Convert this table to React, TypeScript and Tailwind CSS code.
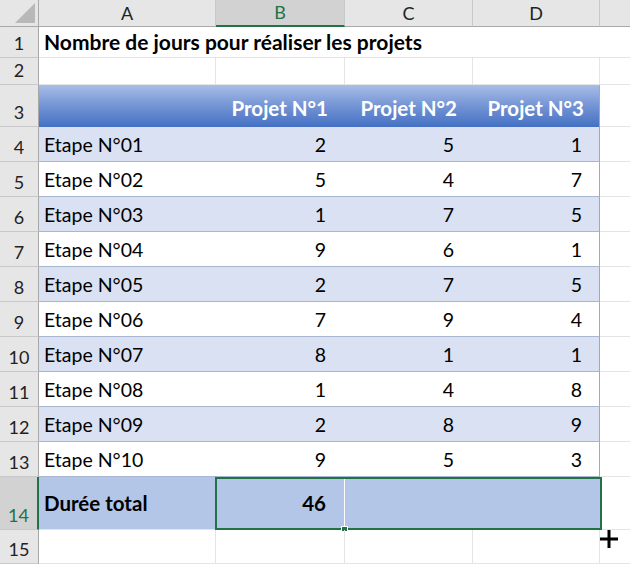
import React from "react";

const data: number[][] = [
  [2, 5, 1],
  [5, 4, 7],
  [1, 7, 5],
  [9, 6, 1],
  [2, 7, 5],
  [7, 9, 4],
  [8, 1, 1],
  [1, 4, 8],
  [2, 8, 9],
  [9, 5, 3],
];

const font = { fontFamily: "Lato, 'Open Sans', sans-serif" };

function RowHeader({ n, h, selected }: { n: number; h: string; selected?: boolean }) {
  return (
    <div
      className={`${h} w-[39px] shrink-0 flex justify-center items-end border-b border-[#c8c8c8] ${
        selected ? "bg-[#d2d2d2] text-[#217346] border-r-2 border-r-[#217346]" : "bg-[#e6e6e6] text-[#222] border-r border-r-[#a8a8a8]"
      } text-[18px] leading-none`}
    >
      <span className="pb-[5px]">{n}</span>
    </div>
  );
}

export default function App() {
  return (
    <div className="w-[630px] h-[564px] overflow-hidden bg-white relative text-black" style={font}>
      {/* Column headers */}
      <div className="flex h-[27px]">
        <div className="w-[39px] shrink-0 bg-[#e6e6e6] border-r border-b border-[#a8a8a8] relative">
          <svg className="absolute right-[3px] bottom-[3px]" width="20" height="20" viewBox="0 0 20 20">
            <polygon points="20,0 20,20 0,20" fill="#b8b8b8" />
          </svg>
        </div>
        <div className="w-[177px] shrink-0 bg-[#e6e6e6] border-r border-r-[#c8c8c8] border-b border-b-[#a8a8a8] flex items-center justify-center text-[18px] text-[#222]">A</div>
        <div className="w-[129px] shrink-0 bg-[#d2d2d2] border-r border-r-[#c8c8c8] border-b-2 border-b-[#217346] flex items-center justify-center text-[18px] text-[#217346]">B</div>
        <div className="w-[128px] shrink-0 bg-[#e6e6e6] border-r border-r-[#c8c8c8] border-b border-b-[#a8a8a8] flex items-center justify-center text-[18px] text-[#222]">C</div>
        <div className="w-[127px] shrink-0 bg-[#e6e6e6] border-r border-r-[#c8c8c8] border-b border-b-[#a8a8a8] flex items-center justify-center text-[18px] text-[#222]">D</div>
        <div className="flex-1 bg-[#e6e6e6] border-b border-b-[#a8a8a8]" />
      </div>

      {/* Row 1 */}
      <div className="flex h-[31px]">
        <RowHeader n={1} h="h-[31px]" />
        <div className="flex-1 flex items-end pl-[5px] pb-[5px] border-b border-[#e4e4e4] font-bold text-[21px] leading-none whitespace-nowrap">
          Nombre de jours pour réaliser les projets
        </div>
      </div>

      {/* Row 2 */}
      <div className="flex h-[27px]">
        <RowHeader n={2} h="h-[27px]" />
        <div className="w-[177px] shrink-0 border-r border-b border-[#e4e4e4]" />
        <div className="w-[129px] shrink-0 border-r border-b border-[#e4e4e4]" />
        <div className="w-[128px] shrink-0 border-r border-b border-[#e4e4e4]" />
        <div className="w-[127px] shrink-0 border-r border-b border-[#e4e4e4]" />
        <div className="flex-1 border-b border-[#e4e4e4]" />
      </div>

      {/* Row 3 header */}
      <div className="flex h-[42px]">
        <RowHeader n={3} h="h-[42px]" />
        <div className="w-[561px] shrink-0 flex bg-gradient-to-b from-[#a9bde6] via-[#7394d4] to-[#4470c3] text-white font-bold text-[20.5px] leading-none border-r border-[#9aa9c4]">
          <div className="w-[177px] shrink-0" />
          <div className="w-[129px] shrink-0 flex items-end justify-end pr-[17px] pb-[9px]">Projet N°1</div>
          <div className="w-[128px] shrink-0 flex items-end justify-end pr-[16px] pb-[9px]">Projet N°2</div>
          <div className="w-[127px] shrink-0 flex items-end justify-end pr-[16px] pb-[9px]">Projet N°3</div>
        </div>
        <div className="flex-1 border-b border-[#e4e4e4]" />
      </div>

      {/* Data rows */}
      {data.map((r, i) => (
        <div key={i} className="flex h-[35px]">
          <RowHeader n={i + 4} h="h-[35px]" />
          <div
            className={`w-[561px] shrink-0 flex text-[19.5px] leading-none border-b border-b-[#a9b6d1] border-r border-r-[#9aa9c4] ${
              i % 2 === 0 ? "bg-[#d9e1f2]" : "bg-white"
            }`}
          >
            <div className="w-[177px] shrink-0 flex items-end pl-[5px] pb-[7px]">
              Etape N°{String(i + 1).padStart(2, "0")}
            </div>
            <div className="w-[129px] shrink-0 flex items-end justify-end pr-[19px] pb-[7px]">{r[0]}</div>
            <div className="w-[128px] shrink-0 flex items-end justify-end pr-[19px] pb-[7px]">{r[1]}</div>
            <div className="w-[127px] shrink-0 flex items-end justify-end pr-[18px] pb-[7px]">{r[2]}</div>
          </div>
          <div className="flex-1 border-b border-[#e4e4e4]" />
        </div>
      ))}

      {/* Row 14 total */}
      <div className="flex h-[53px] relative">
        <RowHeader n={14} h="h-[53px]" selected />
        <div className="w-[561px] shrink-0 flex bg-[#b4c6e7] font-bold text-[20.5px] leading-none border-b border-[#e4e4e4]">
          <div className="w-[177px] shrink-0 flex items-center pl-[5px]">Durée total</div>
          <div className="w-[129px] shrink-0 flex items-center justify-end pr-[19px]">46</div>
          <div className="flex-1" />
        </div>
        <div className="flex-1 border-b border-[#e4e4e4]" />
        {/* selection overlay */}
        <div className="absolute left-[215px] top-0 w-[387px] h-[53px] border-2 border-[#217346] pointer-events-none" />
        <div className="absolute left-[344px] top-[2px] w-px h-[49px] bg-white" />
        <div className="absolute left-[341px] top-[49px] w-[7px] h-[6px] bg-[#217346] border border-white" />
      </div>

      {/* Row 15 */}
      <div className="flex h-[34px] relative">
        <RowHeader n={15} h="h-[34px]" />
        <div className="w-[177px] shrink-0 border-r border-b border-[#e4e4e4]" />
        <div className="w-[129px] shrink-0 border-r border-b border-[#e4e4e4]" />
        <div className="w-[128px] shrink-0 border-r border-b border-[#e4e4e4]" />
        <div className="w-[127px] shrink-0 border-r border-b border-[#e4e4e4]" />
        <div className="flex-1 border-b border-[#e4e4e4]" />
        {/* cross cursor */}
        <svg className="absolute left-[600px] top-[0px]" width="18" height="18" viewBox="0 0 18 18">
          <rect x="0" y="7.5" width="18" height="3" fill="#000" />
          <rect x="7.5" y="0" width="3" height="18" fill="#000" />
        </svg>
      </div>
    </div>
  );
}
